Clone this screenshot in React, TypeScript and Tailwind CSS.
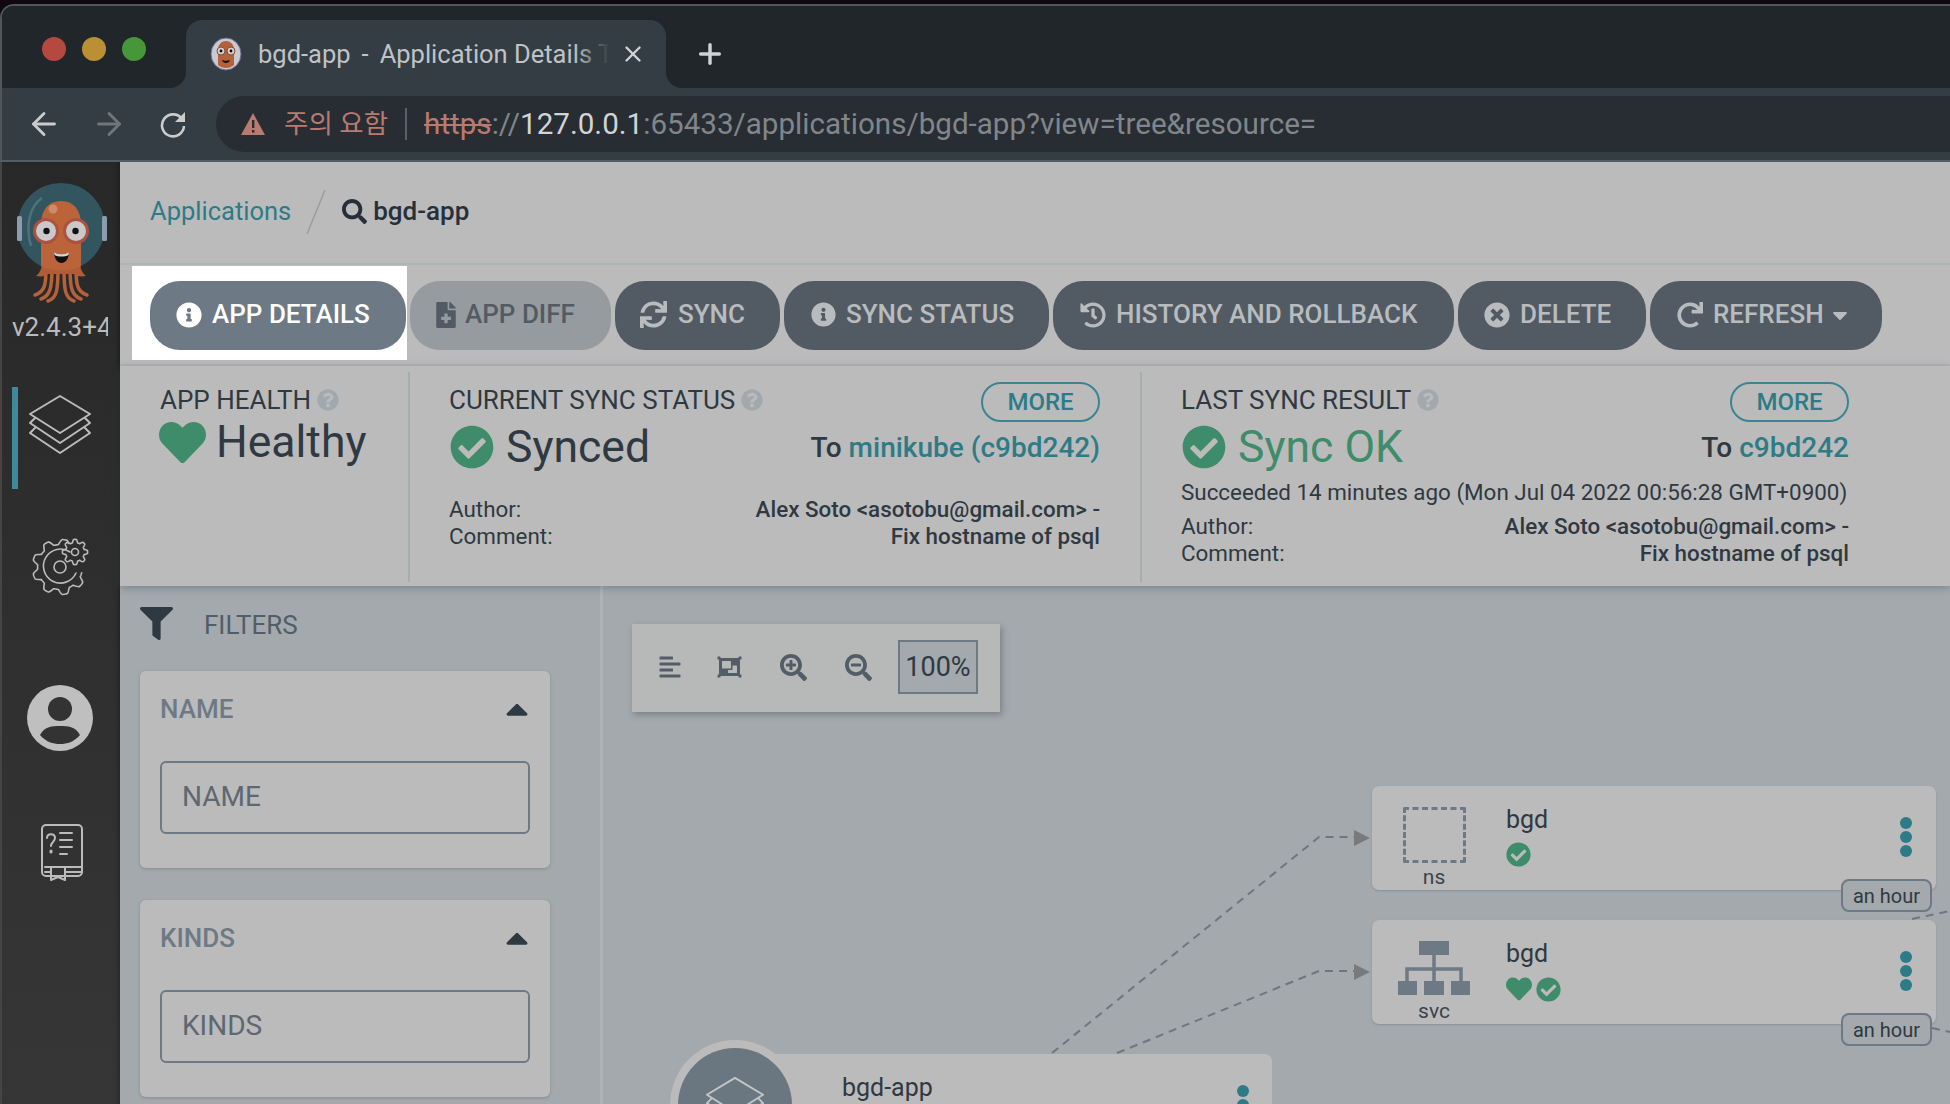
import { ArrowLeft, ArrowRight, Plus, X } from "lucide-react";
import {
  FaAlignLeft,
  FaCaretDown,
  FaCaretUp,
  FaCheckCircle,
  FaFileMedical,
  FaFilter,
  FaHeart,
  FaHistory,
  FaInfoCircle,
  FaObjectGroup,
  FaQuestionCircle,
  FaRedo,
  FaSearch,
  FaSearchMinus,
  FaSearchPlus,
  FaSync,
  FaTimesCircle,
} from "react-icons/fa";

// wavy gear outline, from one angle to another (degrees)
function gearPath(cx: number, cy: number, r: number, amp: number, teeth: number, from: number, to: number, close = false) {
  const pts: string[] = [];
  const steps = 160;
  for (let i = 0; i <= steps; i++) {
    const deg = from + ((to - from) * i) / steps;
    const a = (deg * Math.PI) / 180;
    const wave = Math.cos(a * teeth);
    const rad = r + amp * Math.max(-1, Math.min(1, wave * 1.6));
    pts.push(`${i === 0 ? "M" : "L"}${(cx + rad * Math.cos(a)).toFixed(2)} ${(cy + rad * Math.sin(a)).toFixed(2)}`);
  }
  return pts.join(" ") + (close ? " Z" : "");
}

function ArgoLogo() {
  return (
    <svg width="100" height="128" viewBox="11 178 100 128" className="shrink-0">
      <circle cx="61" cy="227" r="44" fill="#33555f" />
      <rect x="17" y="216" width="5" height="25" rx="1.5" fill="#8d9cad" />
      <rect x="102" y="216" width="5" height="25" rx="1.5" fill="#8d9cad" />
      <path d="M42 198 C30 206 25 225 31 246" stroke="#4f727a" strokeWidth="2.5" fill="none" />
      <g fill="none" stroke="#b5613a" strokeLinecap="round">
        <path d="M46 268 C46 284 45 292 35 295" strokeWidth="3.5" />
        <path d="M52 268 C52 288 50 296 41 299" strokeWidth="3.5" />
        <path d="M58 268 C58 290 57 298 48 301" strokeWidth="3.5" />
        <path d="M64 268 C64 290 65 298 74 301" strokeWidth="3.5" />
        <path d="M70 268 C70 288 72 296 81 299" strokeWidth="3.5" />
        <path d="M76 268 C76 284 77 292 87 295" strokeWidth="3.5" />
      </g>
      <path d="M42 262 C42 268 40 273 36 276 C42 277 46 276 48 274 L74 274 C76 276 80 277 86 276 C82 273 80 268 80 262 Z" fill="#b05c37" />
      <path d="M41 266 L41 225 C41 209 49 201 61 201 C73 201 81 209 81 225 L81 266 C72 272 50 272 41 266 Z" fill="#bb6439" />
      <circle cx="53" cy="209" r="4.5" fill="#cf8a6b" />
      <circle cx="46" cy="231" r="13" fill="#ad5240" />
      <circle cx="76" cy="231" r="13" fill="#ad5240" />
      <circle cx="46" cy="231" r="10" fill="#c9c9c9" />
      <circle cx="76" cy="231" r="10" fill="#c9c9c9" />
      <circle cx="46.5" cy="231" r="3.2" fill="#111" />
      <circle cx="75.5" cy="231" r="3.2" fill="#111" />
      <path d="M54 252 C58 255 65 255 69 252 C69 259 65 263 61.5 263 C58 263 54 259 54 252 Z" fill="#111" />
      <path d="M54 252 C58 255 65 255 69 252 L68.5 255 C65 257 58 257 54.5 255 Z" fill="#d4d4d4" />
    </svg>
  );
}

function Favicon() {
  return (
    <svg width="32" height="34" viewBox="0 0 32 34" className="shrink-0">
      <ellipse cx="16" cy="17" rx="15" ry="16" fill="#c9c9d2" stroke="#6d6a92" strokeWidth="1" />
      <path d="M8 28 L8 13 C8 7 12 4 16 4 C20 4 24 7 24 13 L24 28 C20 32 12 32 8 28 Z" fill="#b5613a" />
      <circle cx="11" cy="14" r="4" fill="#d0d0d0" stroke="#8f4735" />
      <circle cx="21" cy="14" r="4" fill="#d0d0d0" stroke="#8f4735" />
      <circle cx="11" cy="14" r="1.4" fill="#111" />
      <circle cx="21" cy="14" r="1.4" fill="#111" />
      <path d="M12 23 C14 24 18 24 20 23 C19 27 13 27 12 23 Z" fill="#111" />
    </svg>
  );
}

function LayersIcon({ size = 62, color = "#bbbbbb", sw = 2 }: { size?: number; color?: string; sw?: number }) {
  return (
    <svg width={size} height={size} viewBox="0 0 62 60" fill="none" stroke={color} strokeWidth={sw} strokeLinejoin="round" strokeLinecap="round" className="shrink-0">
      <path d="M31 1 L61 19 L31 38 L1 19 Z" />
      <path d="M6 23 L1 28 L31 48 L61 28 L56 23" />
      <path d="M6 33 L1 38 L31 58 L61 38 L56 33" />
    </svg>
  );
}

function GearIcon() {
  return (
    <svg width="60" height="60" viewBox="30 537 60 60" fill="none" stroke="#bbbbbb" strokeWidth="1.6" strokeLinejoin="round" strokeLinecap="round" className="shrink-0">
      <path d={gearPath(60, 567, 25, 2.6, 9, 15, 290)} />
      <path d="M70 552 A17 17 0 1 0 76 573" />
      <circle cx="60" cy="567" r="6" />
      <path d={gearPath(75, 552, 11, 1.6, 8, 0, 360, true)} />
      <circle cx="75" cy="552" r="3.5" />
    </svg>
  );
}

function UserIcon() {
  return (
    <svg width="66" height="66" viewBox="0 0 66 66" className="shrink-0">
      <circle cx="33" cy="33" r="33" fill="#bfbfbf" />
      <circle cx="33" cy="24" r="12" fill="#333333" />
      <path d="M13 50 C18 41 25 41 33 41 C41 41 48 41 53 50 C47 57 40 59 33 59 C26 59 19 57 13 50 Z" fill="#333333" />
    </svg>
  );
}

function BookIcon() {
  return (
    <svg width="42" height="58" viewBox="0 0 42 58" fill="none" stroke="#bbbbbb" strokeWidth="2" strokeLinecap="round" strokeLinejoin="round" className="shrink-0">
      <rect x="1" y="1" width="40" height="51" rx="4" />
      <path d="M4 43 L41 43 M4 48 L10 48 M24 48 L41 48" />
      <path d="M10 43 L10 56 L17 53 L24 56 L24 43" />
      <path d="M6 14 C6 9 14 9 14 14 C14 18 10 18 10 22" />
      <path d="M10 27 L10 28" strokeWidth="3" />
      <path d="M19 9 L31 9 M19 16 L31 16 M19 23 L31 23 M19 30 L26 30" />
    </svg>
  );
}

function SvcIcon() {
  return (
    <svg width="72" height="54" viewBox="0 0 72 54" className="shrink-0">
      <g fill="#6d7a85">
        <rect x="21" y="0" width="30" height="14" />
        <rect x="0" y="40" width="19" height="14" />
        <rect x="26" y="40" width="20" height="14" />
        <rect x="53" y="40" width="19" height="14" />
      </g>
      <path d="M36 14 L36 40 M9 40 L9 28 L63 28 L63 40" fill="none" stroke="#6d7a85" strokeWidth="3.5" />
    </svg>
  );
}

function ReloadIcon() {
  return (
    <svg width="30" height="30" viewBox="0 0 30 30" fill="none" className="shrink-0">
      <path d="M24 10 A11 11 0 1 0 26 17" stroke="#c9cbcc" strokeWidth="2.6" />
      <path d="M27 3 L27 13 L17 13 Z" fill="#c9cbcc" />
    </svg>
  );
}

function ActionButton({
  icon,
  label,
  w,
  pl,
  gap,
  variant = "dark",
  caret,
}: {
  icon: React.ReactNode;
  label: string;
  w: string;
  pl: string;
  gap: string;
  variant?: "dark" | "light" | "active";
  caret?: boolean;
}) {
  const tone =
    variant === "active"
      ? "bg-[#6d7a85] text-white"
      : variant === "light"
        ? "bg-[#969b9f] text-[#525b64]"
        : "bg-[#525b64] text-[#b9bcbe]";
  return (
    <div className={`h-[69px] rounded-[30px] flex items-center shrink-0 pb-[2px] text-[26px] font-medium whitespace-nowrap ${w} ${pl} ${gap} ${tone}`}>
      {icon}
      <span>{label}</span>
      {caret && <FaCaretDown className="w-[20px] h-[24px] -ml-[4px]" />}
    </div>
  );
}

function MoreButton() {
  return (
    <div className="w-[119px] h-[40px] rounded-[20px] border-2 border-[#3a8592] text-[#2e7b88] text-[24px] font-medium flex items-center justify-center shrink-0">
      MORE
    </div>
  );
}

function Help() {
  return <FaQuestionCircle className="w-[22px] h-[22px] text-[#a2a9ae] shrink-0" />;
}

function AuthorRows() {
  return (
    <div className="flex justify-between text-[22.4px] leading-[27px] text-[#2f3942]">
      <div>
        <div>Author:</div>
        <div>Comment:</div>
      </div>
      <div className="text-right font-medium">
        <div>{"Alex Soto <asotobu@gmail.com> -"}</div>
        <div>Fix hostname of psql</div>
      </div>
    </div>
  );
}

function FilterBox({ title }: { title: string }) {
  return (
    <div className="h-[197px] bg-[#bbbbbb] rounded-[6px] shadow-[0_1px_3px_rgba(80,90,100,0.35)] px-[20px] pt-[20px]">
      <div className="flex items-center justify-between h-[36px]">
        <span className="text-[26px] font-medium text-[#6d7a85]">{title}</span>
        <FaCaretUp className="w-[32px] h-[36px] text-[#2f3942] -mr-[3px]" />
      </div>
      <div className="mt-[34px] h-[73px] border-2 border-[#6d7a85] rounded-[6px] flex items-center pl-[20px] pb-[2px] text-[28px] text-[#5d6872]">
        {title}
      </div>
    </div>
  );
}

function ResourceNode({
  top,
  label,
  icon,
  heart,
}: {
  top: string;
  label: string;
  icon: React.ReactNode;
  heart?: boolean;
}) {
  return (
    <div className={`absolute left-[769px] w-[564px] h-[104px] bg-[#bbbbbb] rounded-[7px] shadow-[0_1px_2px_rgba(80,90,100,0.3)] flex ${top}`}>
      <div className="w-[124px] flex flex-col items-center shrink-0">
        <div className="h-[82px] flex items-center justify-center pt-[17px]">{icon}</div>
        <div className="text-[21px] leading-[26px] text-[#3a444c]">{label}</div>
      </div>
      <div className="ml-[10px] pt-[19px] flex-1">
        <div className="text-[25px] leading-[30px] text-[#2f3942]">bgd</div>
        <div className="flex items-center gap-[4px] mt-[7px] text-[#3f8c6b]">
          {heart && <FaHeart className="w-[26px] h-[26px]" />}
          <FaCheckCircle className="w-[25px] h-[25px]" />
        </div>
      </div>
      <div className="flex flex-col gap-[2px] pt-[31px] pr-[24px]">
        <span className="w-[12px] h-[12px] rounded-full bg-[#2e7b88]" />
        <span className="w-[12px] h-[12px] rounded-full bg-[#2e7b88]" />
        <span className="w-[12px] h-[12px] rounded-full bg-[#2e7b88]" />
      </div>
      <div className="absolute right-[4px] top-[93px] w-[91px] h-[33px] rounded-[8px] border-2 border-[#6d7a85] bg-[#a3a9ac] text-[20px] text-[#2f3942] flex items-center justify-center">
        an hour
      </div>
    </div>
  );
}

export default function App() {
  return (
    <div className="w-full h-[1104px] overflow-hidden flex flex-col bg-[#0f0810] font-['Roboto','Noto_Sans_CJK_KR',sans-serif]">
      <div className="h-[4px] shrink-0" />
      {/* browser chrome */}
      <div className="shrink-0 rounded-tl-[14px] border-t-2 border-l-2 border-[#50565a] overflow-hidden">
        <div className="h-[82px] flex bg-[linear-gradient(to_bottom,#202629_50%,#343d44_50%)]">
          <div className="w-[184px] bg-[#202629] rounded-br-[16px] flex items-center gap-[16px] pl-[40px] pt-[4px] shrink-0">
            <span className="w-[24px] h-[24px] rounded-full bg-[#b5483f]" />
            <span className="w-[24px] h-[24px] rounded-full bg-[#bb8f33]" />
            <span className="w-[24px] h-[24px] rounded-full bg-[#46963a]" />
          </div>
          <div className="w-[480px] mt-[14px] bg-[#343d44] rounded-t-[16px] flex items-center pl-[24px] shrink-0 relative">
            <Favicon />
            <span className="ml-[16px] w-[354px] overflow-hidden whitespace-nowrap text-[25.5px] text-[#bfc3c5]">
              bgd-app<span className="mx-[11px]">-</span>Application Details T
            </span>
            <span className="absolute left-[388px] top-0 w-[42px] h-full bg-[linear-gradient(to_right,rgba(52,61,68,0),#343d44_85%)]" />
            <X className="w-[26px] h-[26px] text-[#d0d2d3] ml-[8px] relative" strokeWidth={2.2} />
          </div>
          <div className="flex-1 bg-[#202629] rounded-bl-[16px] flex items-center pl-[28px] pt-[14px]">
            <Plus className="w-[32px] h-[32px] text-[#d0d2d3]" strokeWidth={2.6} />
          </div>
        </div>
        <div className="h-[72px] bg-[#343d44] flex items-center pl-[24px]">
          <ArrowLeft className="w-[36px] h-[36px] text-[#c9cbcc] shrink-0" strokeWidth={1.9} />
          <ArrowRight className="w-[36px] h-[36px] text-[#70777c] ml-[29px] shrink-0" strokeWidth={1.9} />
          <div className="ml-[31px]">
            <ReloadIcon />
          </div>
          <div className="ml-[28px] flex-1 h-[56px] rounded-l-[28px] bg-[#282d33] flex items-center pl-[24px] text-[29.6px] whitespace-nowrap">
            <svg width="26" height="24" viewBox="0 0 26 24" className="shrink-0">
              <path d="M13 1 L25 23 L1 23 Z" fill="#b97a70" />
              <rect x="12" y="8" width="2.4" height="8" fill="#282d33" />
              <rect x="12" y="18" width="2.4" height="2.6" fill="#282d33" />
            </svg>
            <span className="ml-[18px] text-[26.5px] text-[#b97a70]">주의 요함</span>
            <span className="ml-[17px] w-[2px] h-[32px] bg-[#5b6166]" />
            <span className="ml-[17px] text-[#b97a70] line-through">https</span>
            <span className="text-[#80868a]">://</span>
            <span className="text-[#d2d4d5]">127.0.0.1</span>
            <span className="text-[#80868a]">:65433/applications/bgd-app?view=tree&amp;resource=</span>
          </div>
        </div>
      </div>
      <div className="h-[2px] bg-[#565d62] shrink-0" />

      <div className="flex-1 min-h-0 flex">
        {/* sidebar */}
        <div className="w-[120px] shrink-0 border-l-2 border-[#454545] bg-[linear-gradient(to_bottom,#282828,#363636)] shadow-[inset_-5px_0_5px_-4px_rgba(0,0,0,0.35)] flex flex-col pt-[16px]">
          <div className="pl-[9px]">
            <ArgoLogo />
          </div>
          <div className="ml-[10px] mt-[6px] w-[96px] overflow-hidden whitespace-nowrap text-[26px] leading-[30px] text-[#bbbbbb]">v2.4.3+4</div>
          <div className="relative h-[102px] mt-[45px] flex items-start pt-[7px] pl-[27px]">
            <span className="absolute left-[10px] top-0 w-[6px] h-full bg-[#3d8a9a]" />
            <LayersIcon />
          </div>
          <div className="mt-[48px] pl-[28px]">
            <GearIcon />
          </div>
          <div className="mt-[88px] pl-[25px]">
            <UserIcon />
          </div>
          <div className="mt-[73px] pl-[39px]">
            <BookIcon />
          </div>
        </div>

        <div className="flex-1 min-w-0 flex flex-col">
          {/* breadcrumbs */}
          <div className="h-[103px] bg-[#bbbbbb] border-b-2 border-[#b0b6b6] flex items-center pl-[30px] pb-[2px] shrink-0">
            <span className="text-[25.5px] text-[#2e7b88]">Applications</span>
            <svg width="20" height="46" viewBox="0 0 20 46" className="ml-[15px]">
              <path d="M19 1 L1 45" stroke="#989ea2" strokeWidth="1.5" />
            </svg>
            <FaSearch className="ml-[16px] w-[25px] h-[25px] text-[#27303a]" />
            <span className="ml-[6px] text-[26px] font-medium text-[#27303a]">bgd-app</span>
          </div>
          {/* actions */}
          <div className="h-[101px] bg-[#bbbbbb] border-b-2 border-[#b0b6b6] flex items-start pl-[12px] pt-[16px] gap-[4px] shrink-0">
            <div className="bg-white pl-[18px] pr-[1px] pt-[15px] pb-[10px] -mt-[15px] -mr-[1px]">
              <ActionButton variant="active" w="w-[256px]" pl="pl-[26px]" gap="gap-[10px]" label="APP DETAILS" icon={<FaInfoCircle className="w-[26px] h-[26px]" />} />
            </div>
            <ActionButton variant="light" w="w-[201px]" pl="pl-[26px]" gap="gap-[9px]" label="APP DIFF" icon={<FaFileMedical className="w-[20px] h-[26px]" />} />
            <ActionButton w="w-[165px]" pl="pl-[25px]" gap="gap-[11px]" label="SYNC" icon={<FaSync className="w-[27px] h-[27px]" />} />
            <ActionButton w="w-[265px]" pl="pl-[27px]" gap="gap-[10px]" label="SYNC STATUS" icon={<FaInfoCircle className="w-[25px] h-[25px]" />} />
            <ActionButton w="w-[401px]" pl="pl-[27px]" gap="gap-[10px]" label="HISTORY AND ROLLBACK" icon={<FaHistory className="w-[26px] h-[26px]" />} />
            <ActionButton w="w-[188px]" pl="pl-[26px]" gap="gap-[10px]" label="DELETE" icon={<FaTimesCircle className="w-[26px] h-[26px]" />} />
            <ActionButton w="w-[232px]" pl="pl-[27px]" gap="gap-[10px]" label="REFRESH" caret icon={<FaRedo className="w-[26px] h-[26px]" />} />
          </div>
          {/* status */}
          <div className="h-[220px] bg-[#bbbbbb] flex shrink-0 pt-[6px] shadow-[0_2px_8px_rgba(70,80,90,0.4)] relative z-10">
            <div className="w-[290px] shrink-0 pl-[40px] pt-[14px] border-r-2 border-[#a5adb0] h-[210px]">
              <div className="flex items-center gap-[6px] h-[28px] text-[26px] text-[#2f3942]">
                APP HEALTH <Help />
              </div>
              <div className="flex items-center mt-[8px] h-[46px] -translate-y-[3px]">
                <FaHeart className="w-[47px] h-[47px] -ml-px text-[#3f8c6b]" />
                <span className="ml-[10px] text-[44.5px] text-[#2f3942]">Healthy</span>
              </div>
            </div>
            <div className="w-[732px] shrink-0 pl-[39px] pr-[40px] pt-[10px] border-r-2 border-[#a5adb0] h-[210px]">
              <div className="flex justify-between items-start h-[40px]">
                <div className="flex items-center gap-[6px] h-[36px] text-[26px] text-[#2f3942]">
                  CURRENT SYNC STATUS <Help />
                </div>
                <MoreButton />
              </div>
              <div className="flex items-center justify-between mt-[2px] h-[46px]">
                <div className="flex items-center">
                  <FaCheckCircle className="w-[44px] h-[44px] ml-px text-[#3f8c6b]" />
                  <span className="ml-[12px] text-[44.5px] text-[#2f3942]">Synced</span>
                </div>
                <div className="text-[28px] font-medium text-[#2f3942] pt-[2px]">
                  To <span className="text-[#2e7b88]">minikube (c9bd242)</span>
                </div>
              </div>
              <div className="mt-[26px]">
                <AuthorRows />
              </div>
            </div>
            <div className="w-[707px] shrink-0 pl-[39px] pt-[10px]">
              <div className="flex justify-between items-start h-[40px]">
                <div className="flex items-center gap-[6px] h-[36px] text-[26px] text-[#2f3942]">
                  LAST SYNC RESULT <Help />
                </div>
                <MoreButton />
              </div>
              <div className="flex items-center justify-between mt-[2px] h-[46px]">
                <div className="flex items-center text-[#3f8c6b]">
                  <FaCheckCircle className="w-[44px] h-[44px] ml-px" />
                  <span className="ml-[12px] text-[44.5px]">Sync OK</span>
                </div>
                <div className="text-[28px] font-medium text-[#2f3942] pt-[2px]">
                  To <span className="text-[#2e7b88]">c9bd242</span>
                </div>
              </div>
              <div className="mt-[9px] text-[22.4px] leading-[27px] text-[#2f3942] whitespace-nowrap">Succeeded 14 minutes ago (Mon Jul 04 2022 00:56:28 GMT+0900)</div>
              <div className="mt-[7px]">
                <AuthorRows />
              </div>
            </div>
          </div>
          {/* filters + graph */}
          <div className="flex-1 min-h-0 flex bg-[#a3a9ac]">
            <div className="w-[483px] shrink-0 border-r-[3px] border-[#b0b4b6] pl-[20px] pr-[50px] pt-[19px]">
              <div className="flex items-center h-[36px]">
                <FaFilter className="w-[33px] h-[33px] text-[#2f3942]" />
                <span className="ml-[31px] text-[26px] text-[#525d67] mt-[4px]">FILTERS</span>
              </div>
              <div className="mt-[30px] flex flex-col gap-[32px]">
                <FilterBox title="NAME" />
                <FilterBox title="KINDS" />
              </div>
            </div>
            <div className="flex-1 min-w-0 relative overflow-hidden">
              <svg className="absolute inset-0" width="1347" height="518" fill="none" stroke="#6d7780" strokeWidth="2" strokeDasharray="8 6">
                <path d="M449 467 L716 251 L751 251" />
                <path d="M514 467 L716 385 L751 385" />
                <path d="M1309 333 L1347 325" />
                <path d="M1329 442 L1347 446" />
                <path d="M751 244 L767 252 L751 260 Z" fill="#777b7e" stroke="none" strokeDasharray="none" />
                <path d="M751 378 L767 386 L751 394 Z" fill="#777b7e" stroke="none" strokeDasharray="none" />
              </svg>
              {/* zoom toolbar */}
              <div className="absolute left-[29px] top-[38px] w-[368px] h-[88px] bg-[#b7b9b8] shadow-[2px_3px_6px_rgba(70,85,100,0.45)] flex items-center pl-[26px] pb-[2px] text-[#525d67]">
                <FaAlignLeft className="w-[24px] h-[24px]" />
                <FaObjectGroup className="ml-[34px] w-[27px] h-[24px]" />
                <FaSearchPlus className="ml-[37px] w-[27px] h-[27px]" />
                <FaSearchMinus className="ml-[38px] w-[27px] h-[27px]" />
                <div className="ml-[26px] w-[80px] h-[54px] border-2 border-[#6d7a85] bg-[#a3a9ac] flex items-center justify-center text-[27px] text-[#2f3942]">100%</div>
              </div>
              <ResourceNode
                top="top-[200px]"
                label="ns"
                icon={<span className="block w-[63px] h-[56px] mt-[2px] border-[3px] border-dashed border-[#6d7a85] rounded-[2px]" />}
              />
              <ResourceNode top="top-[334px]" label="svc" heart icon={<SvcIcon />} />
              {/* application node */}
              <div className="absolute left-[132px] top-[468px] w-[537px] h-[120px] bg-[#bbbbbb] rounded-[7px] pl-[107px] pt-[18px]">
                <div className="text-[25px] leading-[32px] text-[#2f3942]">bgd-app</div>
                <div className="absolute left-[502px] top-[31px] flex flex-col gap-[2px]">
                  <span className="w-[12px] h-[12px] rounded-full bg-[#2e7b88]" />
                  <span className="w-[12px] h-[12px] rounded-full bg-[#2e7b88]" />
                </div>
              </div>
              <div className="absolute left-[67px] top-[454px] w-[130px] h-[130px] rounded-full bg-[#bbbbbb] flex justify-center pt-[8px]">
                <div className="w-[114px] h-[114px] rounded-full bg-[#6b7780] flex justify-center pt-[28px]">
                  <LayersIcon size={58} color="#c4c6c7" />
                </div>
              </div>
            </div>
          </div>
        </div>
      </div>
    </div>
  );
}
